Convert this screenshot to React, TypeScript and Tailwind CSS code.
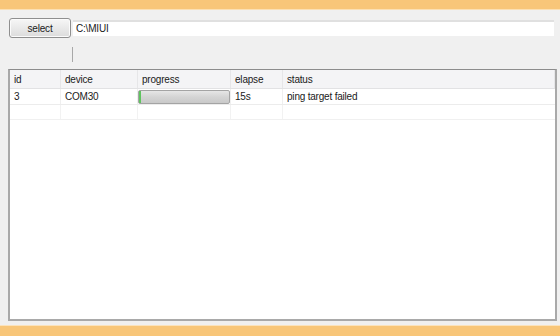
export default function App() {
  const cols = [
    { name: "id", w: "w-[51px]" },
    { name: "device", w: "w-[77px]" },
    { name: "progress", w: "w-[93px]" },
    { name: "elapse", w: "w-[52px]" },
    { name: "status", w: "flex-1" },
  ];

  return (
    <div
      className="w-[560px] h-[336px] flex flex-col bg-[#f0f0f0] text-[10px] tracking-[-0.2px] text-[#1a1a1a]"
      style={{ fontFamily: '"Liberation Sans", Arial, sans-serif' }}
    >
      <div className="h-[10px] bg-[#f8c679] border-b border-[#fbe0b4]" />

      <div className="flex items-center pl-[9px] pr-[6px] mt-[8px] gap-[2px]">
        <button className="w-[62px] h-[20px] rounded-[3px] border border-[#8f8f8f] bg-gradient-to-b from-[#f7f7f7] to-[#dcdcdc] text-[10px] shadow-[inset_0_0_0_1px_#fbfbfb]">
          select
        </button>
        <div className="flex-1 h-[16px] bg-white border-t-2 border-[#e0e0e0] pl-[3px] leading-[13px]">
          C:\MIUI
        </div>
      </div>

      <div className="pl-[72px] mt-[9px]">
        <div className="w-px h-[15px] bg-[#a8a8a8]" />
      </div>

      <div className="ml-[8px] mr-[3px] mt-[7px] h-[252px] border-2 border-[#a9a9a9] border-t border-t-[#8c8c8c] bg-white flex flex-col">
        <div className="flex h-[19px] bg-[#f4f4f6] border-b border-[#e2e2e4]">
          {cols.map((c) => (
            <div
              key={c.name}
              className={`${c.w} pl-[4px] flex items-center border-r border-[#e6e6e8]`}
            >
              {c.name}
            </div>
          ))}
        </div>

        <div className="flex h-[16px] border-b border-[#ececec]">
          <div className="w-[51px] pl-[4px] flex items-center border-r border-[#efefef]">3</div>
          <div className="w-[77px] pl-[4px] flex items-center border-r border-[#efefef]">COM30</div>
          <div className="w-[93px] flex items-center border-r border-[#efefef]">
            <div className="w-[92px] h-[14px] rounded-[2px] border border-[#a4a4a4] bg-gradient-to-b from-[#e6e6e6] via-[#d4d4d4] to-[#c9c9c9] flex">
              <div className="w-[2px] h-full bg-[#5fc45f]" />
            </div>
          </div>
          <div className="w-[52px] pl-[4px] flex items-center border-r border-[#efefef]">15s</div>
          <div className="flex-1 pl-[4px] flex items-center">ping target failed</div>
        </div>

        <div className="flex h-[15px] border-b border-[#f0f0f0]">
          <div className="w-[51px] border-r border-[#f2f2f2]" />
          <div className="w-[77px] border-r border-[#f2f2f2]" />
          <div className="w-[93px] border-r border-[#f2f2f2]" />
          <div className="w-[52px] border-r border-[#f2f2f2]" />
          <div className="flex-1" />
        </div>
      </div>

      <div className="flex-1" />
      <div className="h-[11px] bg-[#f8c679] border-t border-[#fbe3bd]" />
    </div>
  );
}
